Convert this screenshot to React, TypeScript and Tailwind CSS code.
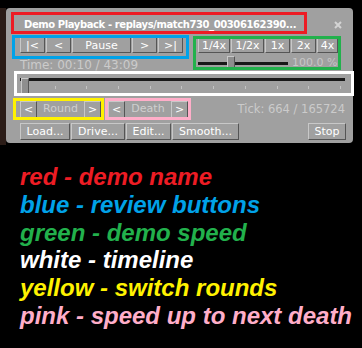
import clsx from "clsx";

const btn =
  "flex items-center justify-center border border-t-[#c8c8c8] border-l-[#c8c8c8] border-r-[#555555] border-b-[#555555] bg-[#a0a0a0] text-[11px] leading-none text-white";

function Btn({
  className,
  children,
}: {
  className: string;
  children: React.ReactNode;
}) {
  return <div className={clsx(btn, className)}>{children}</div>;
}

const legend = [
  { text: "red - demo name", color: "text-[#ed1c24]" },
  { text: "blue - review buttons", color: "text-[#00a2e8]" },
  { text: "green - demo speed", color: "text-[#22b14c]" },
  { text: "white - timeline", color: "text-white" },
  { text: "yellow - switch rounds", color: "text-[#fff200]" },
  { text: "pink - speed up to next death", color: "text-[#ffaec9]" },
];

export default function App() {
  return (
    <div className="relative h-[348px] w-[362px] overflow-hidden bg-black font-['DejaVu_Sans',sans-serif]">
      <div className="flex pt-[8px]">
        <div className="h-[137px] w-[6px] bg-[#2b1c17]" />

        <div className="h-[135px] w-[347px] rounded-[4px] bg-[#a0a0a0]">
          {/* title */}
          <div className="flex h-[29px] items-start pl-[18px] pr-[11px] pt-[11px]">
            <span className="whitespace-nowrap text-[10px] font-bold leading-[12px] tracking-[-0.4px] text-white">
              Demo Playback - replays/match730_00306162390...
            </span>
            <svg
              className="ml-auto mt-[2px]"
              width="8"
              height="8"
              viewBox="0 0 8 8"
            >
              <path
                d="M1 1 L7 7 M7 1 L1 7"
                stroke="#d4d4d4"
                strokeWidth="2"
              />
            </svg>
          </div>

          {/* review + speed */}
          <div className="flex">
            <div className="w-[178px] pl-[14px]">
              <div className="flex h-[16px] gap-[1px]">
                <Btn className="w-[25px]">|&lt;</Btn>
                <Btn className="w-[25px]">&lt;</Btn>
                <Btn className="w-[59px]">Pause</Btn>
                <Btn className="w-[25px]">&gt;</Btn>
                <Btn className="w-[25px]">&gt;|</Btn>
              </div>
              <div className="mt-[5px] whitespace-nowrap text-[12px] leading-[14px] text-[#cbcbcb]">
                Time: 00:10 / 43:09
              </div>
            </div>

            <div className="ml-[14px] pt-[1px]">
              <div className="flex h-[15px] gap-[1px]">
                <Btn className="w-[32px]">1/4x</Btn>
                <Btn className="w-[33px]">1/2x</Btn>
                <Btn className="w-[25px]">1x</Btn>
                <Btn className="w-[25px]">2x</Btn>
                <Btn className="w-[21px]">4x</Btn>
              </div>
              <div className="mt-[3px] flex h-[12px] items-start">
                <div className="relative h-[12px] w-[90px]">
                  <div className="mt-[6px] h-[3px] bg-[#181818]" />
                  <div className="absolute left-[29px] top-0 h-[12px] w-[8px] border border-t-[#c8c8c8] border-l-[#c8c8c8] border-r-[#555555] border-b-[#555555] bg-[#8e8e8e]" />
                </div>
                <span className="ml-[4px] whitespace-nowrap text-[11px] leading-[14px] text-[#c6c6c6]">
                  100.0 %
                </span>
              </div>
            </div>
          </div>

          {/* timeline */}
          <div className="relative ml-[14px] mt-[5px] h-[17px] w-[325px]">
            <div className="mt-[6px] h-[3px] bg-[#181818]" />
            <div className="ml-[3px] mt-[5px] flex h-[3px] w-[318px] justify-between">
              {Array.from({ length: 11 }).map((_, i) => (
                <div key={i} className="h-[3px] w-[1px] bg-[#c4c4c4]" />
              ))}
            </div>
            <div className="absolute left-[1px] top-0 h-[16px] w-[8px] border border-t-[#c8c8c8] border-l-[#c8c8c8] border-r-[#555555] border-b-[#555555] bg-[#8e8e8e]" />
          </div>

          {/* rounds / deaths */}
          <div className="mt-[6px] flex h-[17px] items-center pl-[14px] pr-[8px]">
            <Btn className="h-[17px] w-[17px]">&lt;</Btn>
            <div className="flex h-[17px] w-[47px] items-center justify-center text-[11px] text-[#cfcfcf]">
              Round
            </div>
            <Btn className="h-[17px] w-[17px]">&gt;</Btn>

            <Btn className="ml-[7px] h-[17px] w-[17px]">&lt;</Btn>
            <div className="flex h-[17px] w-[46px] items-center justify-center text-[11px] text-[#cfcfcf]">
              Death
            </div>
            <Btn className="h-[17px] w-[17px]">&gt;</Btn>

            <span className="ml-auto whitespace-nowrap text-[11.5px] leading-[17px] text-[#cbcbcb]">
              Tick: 664 / 165724
            </span>
          </div>

          {/* bottom buttons */}
          <div className="mt-[5px] flex h-[17px] gap-[1px] pl-[14px] pr-[7px]">
            <Btn className="w-[50px]">Load...</Btn>
            <Btn className="w-[54px]">Drive...</Btn>
            <Btn className="w-[45px]">Edit...</Btn>
            <Btn className="w-[67px]">Smooth...</Btn>
            <Btn className="ml-auto w-[38px]">Stop</Btn>
          </div>
        </div>
      </div>

      {/* legend */}
      <div className="mt-[18px] pl-[20px] font-['Liberation_Sans',Arial,sans-serif] text-[24px] font-bold italic leading-[27.8px]">
        {legend.map((l) => (
          <div key={l.text} className={clsx("whitespace-nowrap", l.color)}>
            {l.text}
          </div>
        ))}
      </div>

      {/* annotation boxes */}
      <div className="absolute left-[11px] top-[12px] h-[22px] w-[296px] border-[3px] border-[#ed1c24]" />
      <div className="absolute left-[12px] top-[35px] h-[24px] w-[177px] border-[3px] border-[#00a2e8]" />
      <div className="absolute left-[193px] top-[36px] h-[34px] w-[148px] border-[3px] border-[#22b14c]" />
      <div className="absolute left-[14px] top-[71px] h-[25px] w-[340px] border-[3px] border-white" />
      <div className="absolute left-[13px] top-[98px] h-[22px] w-[91px] border-[3px] border-[#fff200]" />
      <div className="absolute left-[105px] top-[98px] h-[22px] w-[86px] border-[3px] border-[#ffaec9]" />
    </div>
  );
}
